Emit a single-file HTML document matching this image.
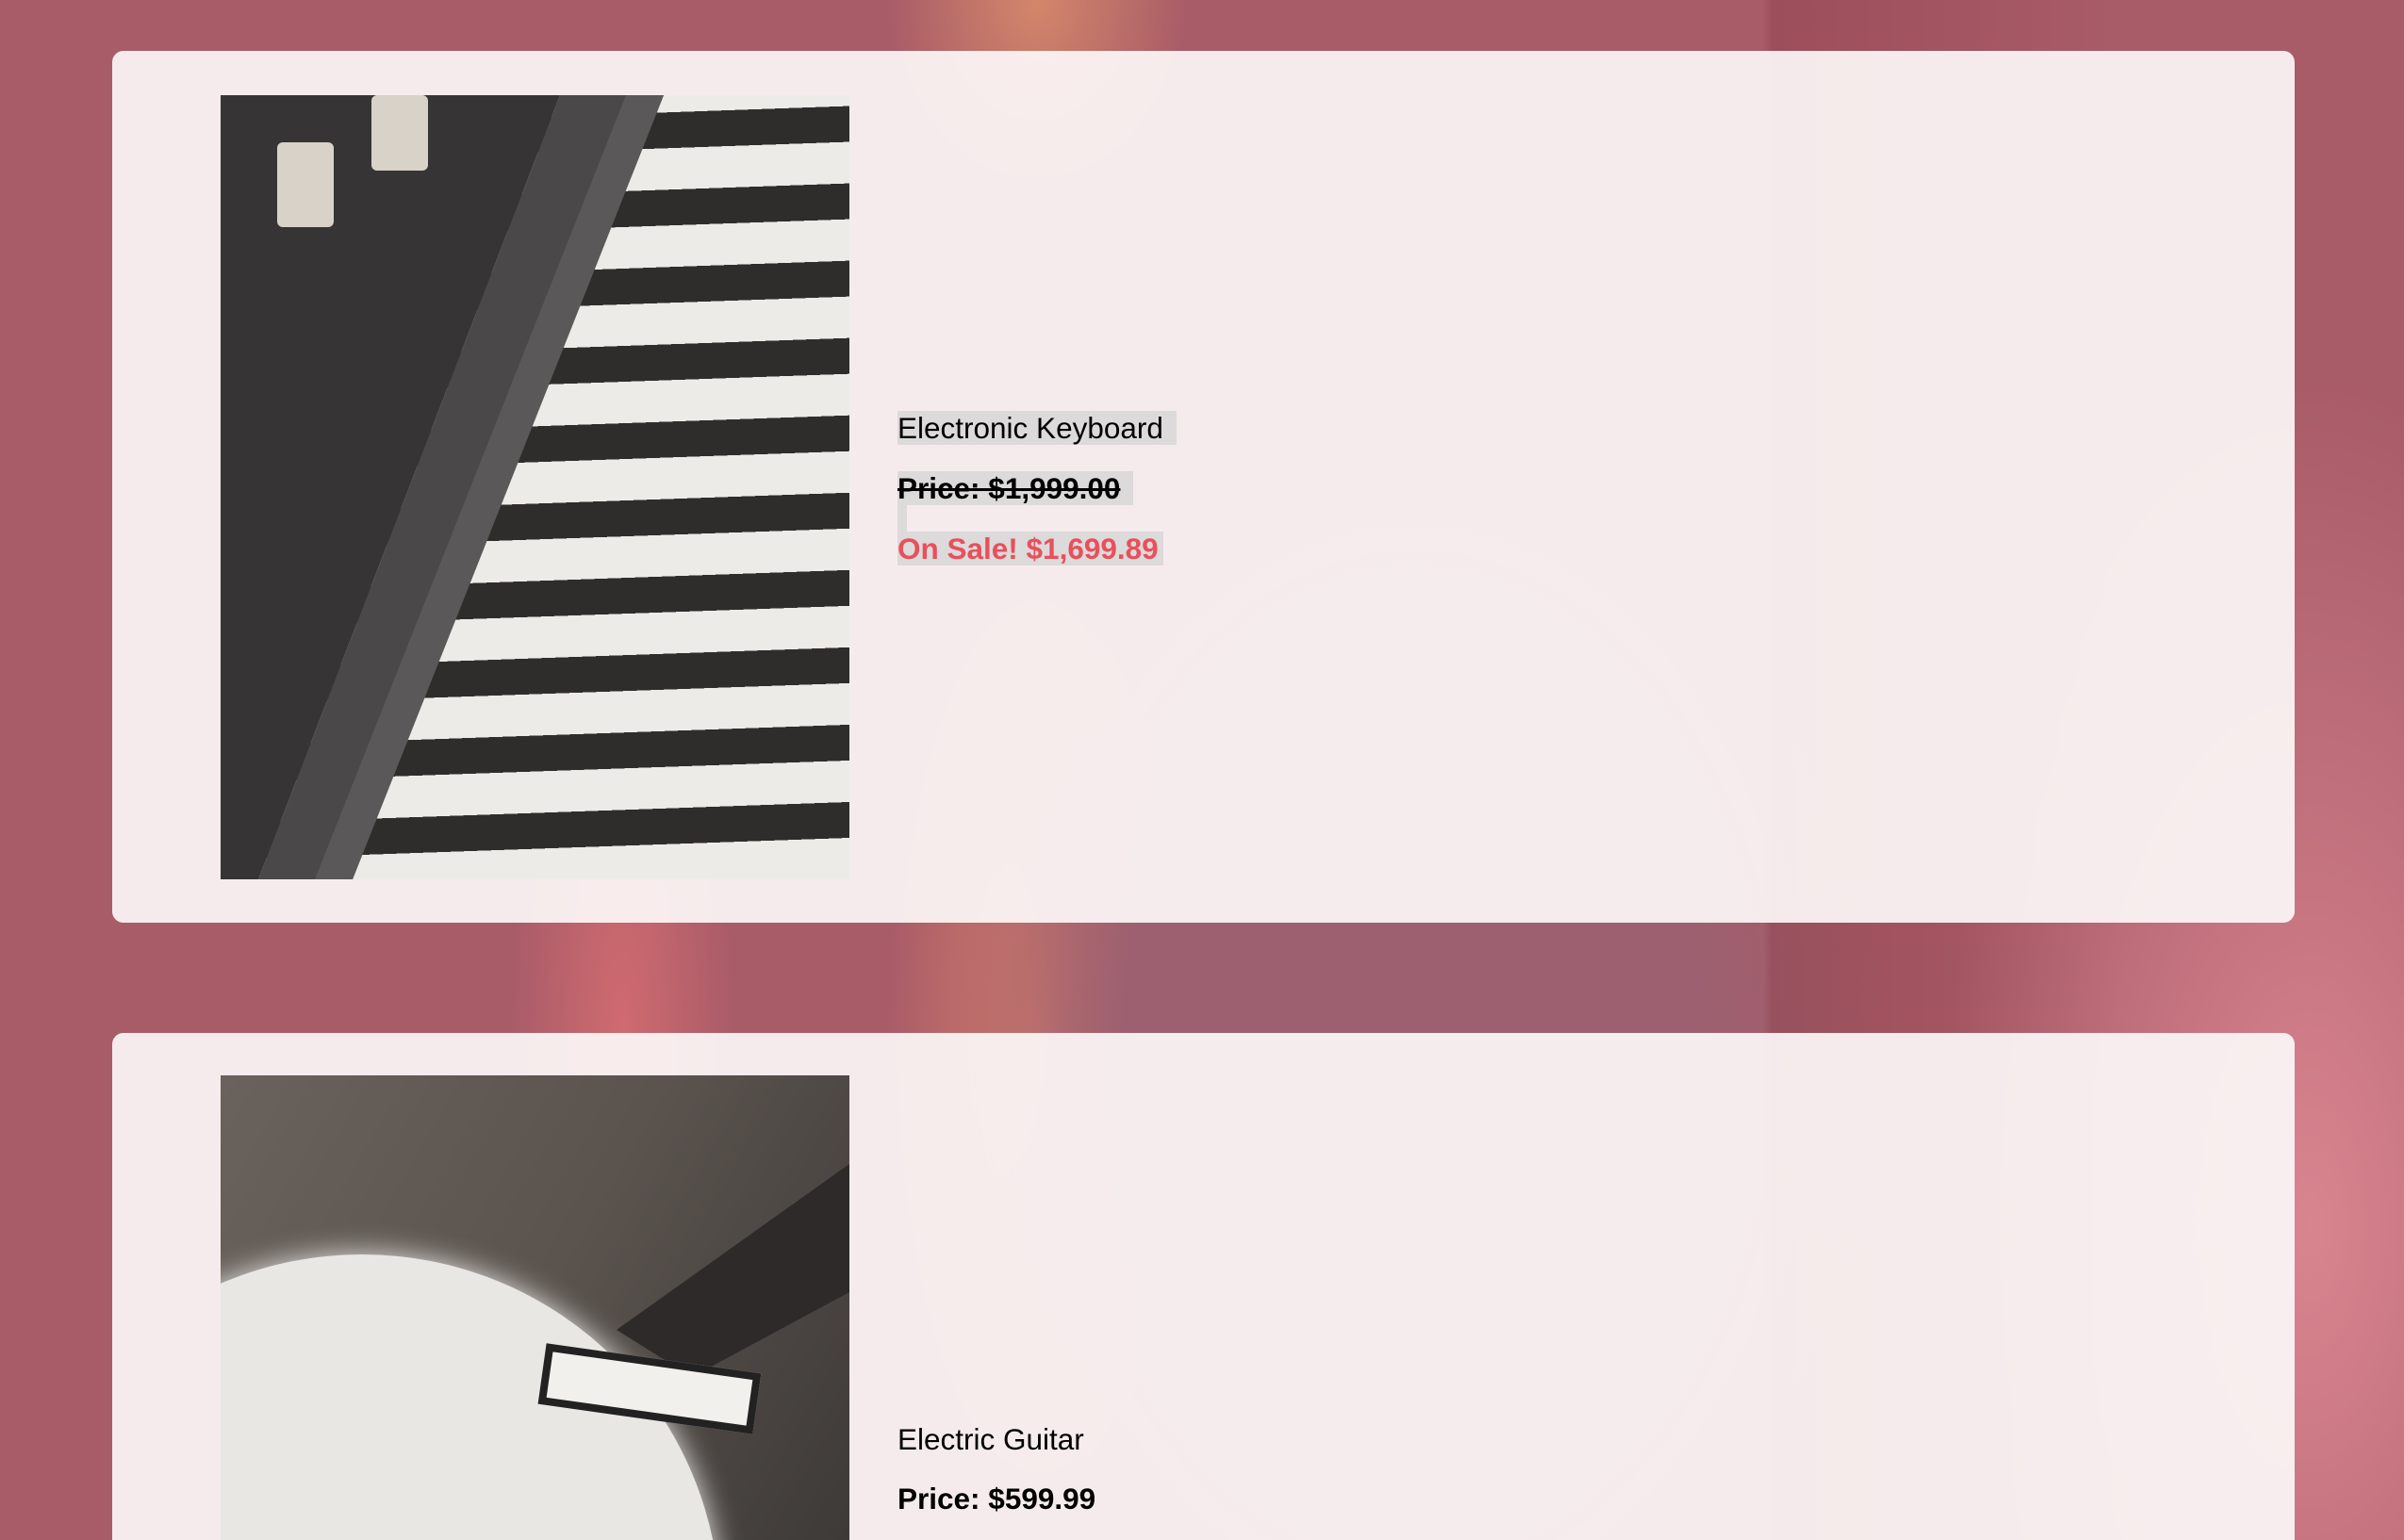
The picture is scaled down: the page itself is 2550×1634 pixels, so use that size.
<!DOCTYPE html>
<html><head><meta charset="utf-8"><style>
*{margin:0;padding:0;box-sizing:border-box}
html,body{width:2550px;height:1634px;overflow:hidden}
body{position:relative;font-family:"Liberation Sans",Arial,sans-serif;
background:
 linear-gradient(90deg,rgba(0,0,0,0) 0,rgba(0,0,0,0) 1870px,rgba(120,40,50,.25) 1880px,rgba(0,0,0,0) 2250px),
 radial-gradient(ellipse 500px 700px at 1500px 1130px,#9c6070 0,#9c6070 60%,rgba(156,96,112,0) 100%),
 radial-gradient(ellipse 160px 500px at 1100px 1100px,#d47c6a 0,rgba(212,124,106,0) 100%),
 radial-gradient(ellipse 160px 200px at 1100px 0px,#d4876a 0,rgba(212,135,106,0) 100%),
 radial-gradient(ellipse 120px 500px at 660px 1100px,#d06a70 0,rgba(208,106,112,0) 100%),
 radial-gradient(ellipse 400px 900px at 2450px 1300px,#d98590 0,rgba(217,133,144,0) 100%),
 #a85c68;}
.card{position:absolute;left:119px;width:2315px;background:rgba(252,246,246,.93);border-radius:12px;}
.img{position:absolute;left:115px;width:667px;height:832px;overflow:hidden}
.k{background:repeating-linear-gradient(-2deg,#ecebe7 0,#ecebe7 44px,#2f2c2c 44px,#2f2c2c 82px);}
.k .panel{position:absolute;left:0;top:0;width:667px;height:832px;background:#363434;clip-path:polygon(0 0,360px 0,40px 832px,0 832px)}
.k .bar{position:absolute;left:0;top:0;width:667px;height:832px;background:#4a4848;clip-path:polygon(360px 0,470px 0,140px 832px,40px 832px)}
.k .bar2{position:absolute;left:0;top:0;width:667px;height:832px;background:#5a5858;clip-path:polygon(430px 0,470px 0,140px 832px,100px 832px)}
.k .knob{position:absolute;background:#d8d2c8;border-radius:6px}
.g{background:linear-gradient(120deg,#6a625c 0,#5a534e 50%,#3e3a38 100%);}
.g .neck{position:absolute;left:0;top:0;width:667px;height:493px;background:#2e2a2a;clip-path:polygon(667px 94px,667px 230px,500px 320px,420px 270px)}
.g .body{position:absolute;left:-230px;top:190px;width:760px;height:760px;border-radius:50%;background:#e9e7e4;box-shadow:0 0 30px #e9e7e4}
.g .pick{position:absolute;left:340px;top:300px;width:230px;height:65px;background:#f2f0ec;border:8px solid #222;transform:rotate(8deg)}
.t{position:absolute;left:833px;font-size:31.5px;line-height:36px;color:#000;white-space:pre}
.bx{background:#dcdada}
.b{font-weight:bold}
</style></head><body>
<div class="card" style="top:54px;height:925px">
 <div class="img k" style="top:47px"><div class="panel"></div><div class="bar"></div><div class="bar2"></div>
  <div class="knob" style="left:60px;top:50px;width:60px;height:90px"></div>
  <div class="knob" style="left:160px;top:0;width:60px;height:80px"></div></div>
 <div class="t bx" style="top:382px;width:296px">Electronic Keyboard</div>
 <div class="t bx b" style="top:446px;width:250px;text-decoration:line-through">Price: $1,999.00</div>
 <div class="bx" style="position:absolute;left:833px;top:478px;width:10px;height:34px"></div>
 <div class="t bx b" style="top:510px;width:282px;color:#e8505b">On Sale! $1,699.89</div>
</div>
<div class="card" style="top:1096px;height:538px;border-radius:12px 12px 0 0;overflow:hidden">
 <div class="img g" style="top:45px;height:493px"><div class="body"></div><div class="neck"></div><div class="pick"></div></div>
 <div class="t" style="top:413px">Electric Guitar</div>
 <div class="t b" style="top:476px">Price: $599.99</div>
</div>
</body></html>
